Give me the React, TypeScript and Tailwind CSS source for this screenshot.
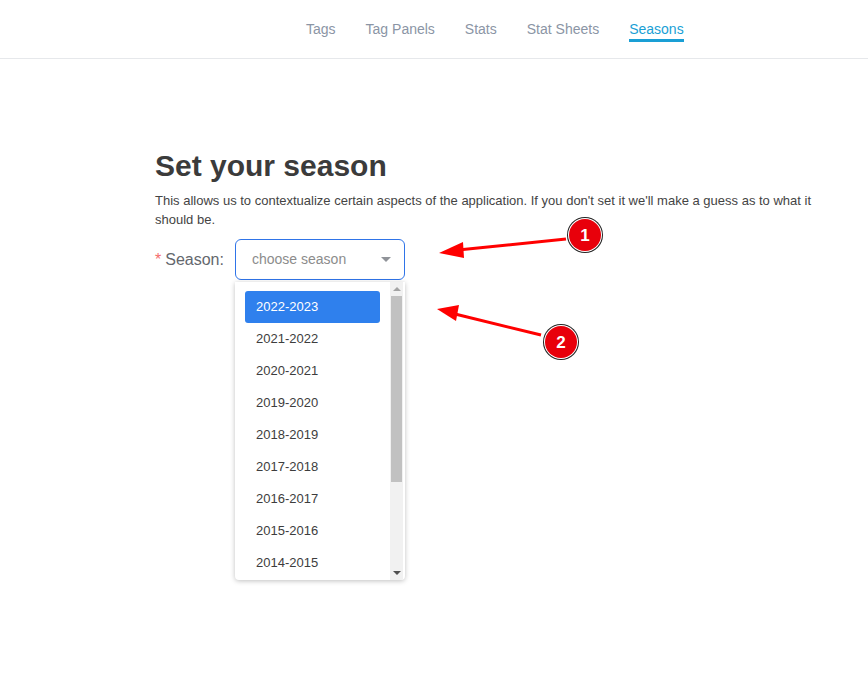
import { ReactNode } from 'react';

const NAV = ['Tags', 'Tag Panels', 'Stats', 'Stat Sheets', 'Seasons'];
const SEASONS = [
  '2022-2023',
  '2021-2022',
  '2020-2021',
  '2019-2020',
  '2018-2019',
  '2017-2018',
  '2016-2017',
  '2015-2016',
  '2014-2015',
];

function NavLink({ label, active }: { label: string; active?: boolean }) {
  return (
    <a
      className={
        active
          ? 'relative text-[14px] text-[#1a9fd5] pb-[1px] border-b-[3px] border-[#1a9fd5] leading-[17px] mt-[5px]'
          : 'text-[14px] text-[#8b95a5] leading-[17px] mt-[1px]'
      }
    >
      {label}
    </a>
  );
}

function Badge({ n, cx, cy }: { n: number; cx: number; cy: number }): ReactNode {
  return (
    <g>
      <circle cx={cx} cy={cy} r={18} fill="#222" />
      <circle cx={cx} cy={cy} r={17} fill="#fff" />
      <circle cx={cx} cy={cy} r={16} fill="#e8000b" />
      <text
        x={cx}
        y={cy + 6}
        textAnchor="middle"
        fontSize="17"
        fontWeight="700"
        fill="#fff"
        fontFamily="'Liberation Sans', Arial, sans-serif"
      >
        {n}
      </text>
    </g>
  );
}

function Annotations() {
  return (
    <svg className="absolute inset-0 pointer-events-none" width={868} height={680}>
      <line x1={566} y1={239} x2={458} y2={250} stroke="#f00" strokeWidth={3} />
      <polygon points="439,253 463,242 464,258" fill="#f00" />
      <line x1={541} y1={335} x2={455} y2={314} stroke="#f00" strokeWidth={3} />
      <polygon points="437,309 459,305 456,321" fill="#f00" />
      <Badge n={1} cx={585} cy={235} />
      <Badge n={2} cx={561} cy={342} />
    </svg>
  );
}

export default function App() {
  return (
    <div className="relative w-[868px] h-[680px] bg-white overflow-hidden font-['Liberation_Sans',Arial,sans-serif]">
      <header className="h-[59px] border-b border-[#e6e8eb] flex items-center pl-[306px] gap-[30px]">
        {NAV.map((n) => (
          <NavLink key={n} label={n} active={n === 'Seasons'} />
        ))}
      </header>

      <main className="pl-[155px] pt-[89px]">
        <h1 className="text-[30px] font-bold text-[#3b3b3b] leading-[35px]">Set your season</h1>
        <p className="mt-[8px] w-[670px] text-[13px] leading-[19px] text-[#444]">
          This allows us to contextualize certain aspects of the application. If you don't set it we'll make a guess as
          to what it should be.
        </p>

        <div className="mt-[10px] flex items-start">
          <label className="h-[41px] flex items-center text-[16px] text-[#64676d] w-[80px]">
            <span className="text-[#f56c6c] mr-[4px]">*</span>Season:
          </label>
          <div className="flex flex-col w-[170px]">
            <div className="h-[41px] rounded-[6px] border border-[#2f74e8] flex items-center pl-[16px] pr-[13px]">
              <span className="flex-1 text-[14px] text-[#8c8c8c]">choose season</span>
              <span className="w-0 h-0 border-l-[5px] border-r-[5px] border-t-[5px] border-l-transparent border-r-transparent border-t-[#909399]" />
            </div>
            <div className="mt-[2px] h-[298px] rounded-b-[4px] bg-white shadow-[0_1px_5px_rgba(0,0,0,0.25)] flex overflow-hidden">
              <ul className="flex-1 pt-[9px] px-[10px]">
                {SEASONS.map((s, i) => (
                  <li
                    key={s}
                    className={
                      i === 0
                        ? 'h-[32px] rounded-[3px] bg-[#2f80ed] text-white text-[13px] flex items-center pl-[11px]'
                        : 'h-[32px] text-[#3d3d3d] text-[13px] flex items-center pl-[11px]'
                    }
                  >
                    {s}
                  </li>
                ))}
              </ul>
              <div className="w-[13px] mr-[2px] bg-[#f1f1f1] flex flex-col items-center">
                <span className="mt-[5px] w-0 h-0 border-l-[4px] border-r-[4px] border-b-[4px] border-l-transparent border-r-transparent border-b-[#a3a3a3]" />
                <div className="mt-[5px] w-[11px] h-[186px] bg-[#c1c1c1]" />
                <div className="flex-1" />
                <span className="mb-[5px] w-0 h-0 border-l-[4px] border-r-[4px] border-t-[4px] border-l-transparent border-r-transparent border-t-[#505050]" />
              </div>
            </div>
          </div>
        </div>
      </main>

      <Annotations />
    </div>
  );
}
